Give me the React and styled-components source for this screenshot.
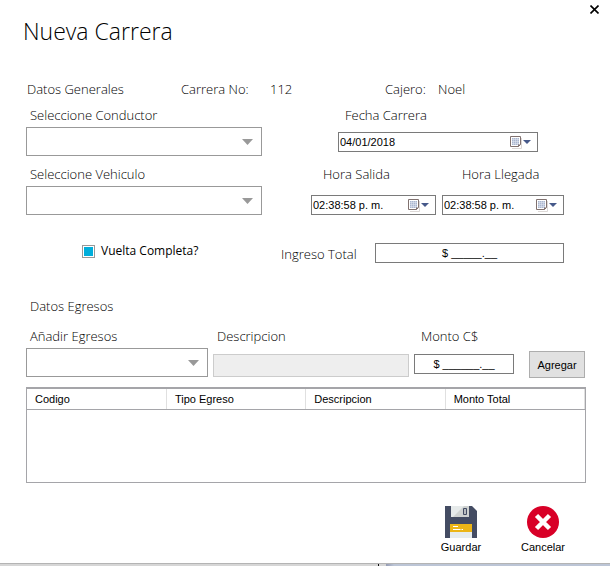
import React, { useState } from "react";
import styled, { createGlobalStyle } from "styled-components";

const GlobalStyle = createGlobalStyle`
  * { box-sizing: border-box; }
  body {
    margin: 0;
    background: #fff;
    color: #000;
    font-family: "Liberation Sans", Arial, sans-serif;
    font-size: 11px;
  }
  button, input, select { font: inherit; color: inherit; }
`;

const Dialog = styled.form`
  display: flex;
  flex-direction: column;
  background: #fff;
`;

const Header = styled.header`
  display: flex;
  justify-content: space-between;
  align-items: flex-start;
  height: 79px;
  padding: 2px 8px 0 23px;
`;

const Title = styled.h1`
  margin: 13px 0 0;
  font: 300 23px/32px "Open Sans", "Noto Sans", sans-serif;
`;

const CloseButton = styled.button`
  display: flex;
  padding: 3px;
  border: 0;
  background: none;
`;

const Content = styled.main`
  display: flex;
  flex-direction: column;
  padding: 0 24px 0 26px;
`;

const InfoRow = styled.div`
  display: grid;
  grid-template-columns: 154fr 89fr 115fr 53fr 148fr;
  padding-left: 1px;
  margin-bottom: 6px;
`;

const lightText = `
  font: 300 13px/20px "Open Sans", "Noto Sans", sans-serif;
  white-space: nowrap;
`;

const Caption = styled.label`
  ${lightText}
  padding-left: ${(p) => p.$indent || 0}px;
`;

const SectionTitle = styled.h2`
  ${lightText}
  margin: ${(p) => (p.$spaced ? "32px 0 10px 4px" : "0")};
`;

const Info = styled.span`
  ${lightText}
`;

const GeneralGrid = styled.div`
  display: grid;
  grid-template-columns: minmax(0, 236fr) minmax(0, 253fr);
  gap: 8px 49px;
  padding-right: 22px;
`;

const Field = styled.div`
  display: flex;
  flex-direction: column;
  min-width: 0;
  gap: ${(p) => p.$gap}px;
`;

const DateField = styled(Field)`
  padding: 0 26px 0 27px;
`;

const TimePair = styled.div`
  display: grid;
  grid-template-columns: 125fr 122fr;
  gap: 6px;
`;

const SelectFrame = styled.div`
  display: grid;
  align-items: center;

  > * { grid-area: 1 / 1; }
  > svg { justify-self: end; margin-right: 9px; pointer-events: none; }
`;

const SelectBox = styled.select`
  appearance: none;
  width: 100%;
  height: 29px;
  padding: 0 26px 0 6px;
  border: 1px solid #999;
  border-radius: 0;
  background: #fff;
`;

const PickerFrame = styled.div`
  display: flex;
  align-items: center;
  height: 20px;
  padding-right: 5px;
  border: 1px solid #7a7a7a;
`;

const PickerInput = styled.input`
  flex: 1;
  min-width: 0;
  padding: 0 0 0 1px;
  border: 0;
  background: none;
`;

const PickerButton = styled.button`
  display: flex;
  padding: 0;
  border: 0;
  background: none;
`;

const TotalsRow = styled.div`
  display: grid;
  grid-template-columns: 255fr 94fr 189fr;
  align-items: start;
  margin-top: 28px;
  padding-right: 22px;

  > ${Caption} { margin-top: 1px; }
`;

const CheckLabel = styled.label`
  display: flex;
  align-items: center;
  gap: 6px;
  padding-left: 56px;
  font: 400 12px/16px "Open Sans", "Noto Sans", sans-serif;
  white-space: nowrap;
`;

const CheckBox = styled.input`
  appearance: none;
  width: 13px;
  height: 13px;
  margin: 0;
  border: 1px solid #999;
  background: #fff;

  &:checked {
    background: #00aedb;
    box-shadow: inset 0 0 0 1px #fff;
  }
`;

const MaskedInput = styled.input`
  width: 100%;
  height: 20px;
  padding: 0 2px;
  border: 1px solid #7a7a7a;
  background: #fff;
  text-align: center;
`;

const DescriptionInput = styled.input`
  width: 100%;
  height: 23px;
  padding: 0 4px;
  border: 1px solid #ccc;
  background: #eee;
`;

const ExpenseRow = styled.div`
  display: grid;
  grid-template-columns: minmax(0, 182fr) minmax(0, 196fr) minmax(0, 100fr) auto;
  column-gap: 5px;
  align-items: start;
`;

const AddButton = styled.button`
  width: 56px;
  height: 27px;
  margin: 25px 1px 0 10px;
  padding: 0;
  border: 1px solid #adadad;
  background: #e1e1e1;
`;

const TableFrame = styled.div`
  min-height: 96px;
  margin-top: 9px;
  border: 1px solid #a5a5a9;
  border-top-width: 2px;
`;

const Table = styled.table`
  width: 100%;
  border-collapse: collapse;
  table-layout: fixed;
`;

const HeadCell = styled.th`
  height: 20px;
  padding: 0 8px;
  border-bottom: 1px solid #a5a5a9;
  border-right: 1px solid #e0e0e0;
  font-weight: 400;
  text-align: left;
`;

const Actions = styled.footer`
  display: flex;
  justify-content: flex-end;
  gap: 22px;
  margin-top: 23px;
  padding: 0 13px 8px 0;
`;

const ActionButton = styled.button`
  display: flex;
  flex-direction: column;
  align-items: center;
  gap: 1px;
  width: 60px;
  padding: 0;
  border: 0;
  background: none;
  line-height: 16px;
`;

const BottomEdge = styled.div`
  display: grid;
  grid-template-columns: 378fr 1px 7px 224fr;
  height: 3px;
  border-top: 1px solid #b4b4b4;
  background: #d6d6d6;
`;

const EdgeTick = styled.i`
  grid-column: 2;
  background: #111;
`;

const EdgePanel = styled.i`
  grid-column: 4;
  background: linear-gradient(90deg, #949bb3, #bcc5d6 8px);
`;

const ArrowIcon = () => (
  <svg width="11" height="6" viewBox="0 0 11 6" aria-hidden="true">
    <path d="M0 0h11L5.500 6z" fill="#999" />
  </svg>
);

const CalendarIcon = () => (
  <svg width="22" height="14" viewBox="0 0 22 14" aria-hidden="true">
    <path d="M2 13.500h9.500V3" fill="none" stroke="#ddd8d6" />
    <path d="M.5 1.500h10v8l-2 2h-8z" fill="#fff" stroke="#80716f" />
    <path d="M2 3h7v7H2z" fill="#aab6cf" />
    <path d="M3.500 3v7M5.500 3v7M7.500 3v7M2 4.500h7M2 6.500h7M2 8.500h7" stroke="#e6eaf3" strokeWidth=".5" />
    <path d="M8 12v-2.500h3z" fill="#80716f" />
    <path d="M13 5h8l-4 4z" fill="#46598a" />
  </svg>
);

const CloseIcon = () => (
  <svg width="9" height="9" viewBox="0 0 9 9" aria-hidden="true">
    <path d="M.5.5l8 8M8.500.5l-8 8" stroke="#000" strokeWidth="1.600" />
  </svg>
);

const SaveIcon = () => (
  <svg width="32" height="32" viewBox="0 0 32 32" aria-hidden="true">
    <path d="M0 0h27l5 5v27H0z" fill="#444c63" />
    <path d="M6 0h18v11H6z" fill="#cfd2d1" />
    <path d="M6 0h13L8 11H6z" fill="#e6eaea" />
    <path d="M18.500 2.500h3v6h-3z" fill="#b8bcc0" stroke="#444c63" />
    <path d="M5 18h22v14H5z" fill="#e6ecee" />
    <path d="M5 18h22v8H5z" fill="#ecb516" />
    <path d="M8 20.500h5M8 23.500h7.500M16.500 23.500h1.500" stroke="#fff" strokeWidth="1.200" />
  </svg>
);

const CancelIcon = () => (
  <svg width="32" height="32" viewBox="0 0 32 32" aria-hidden="true">
    <circle cx="16" cy="16" r="16" fill="#d80027" />
    <path d="M9.500 9.500l13 13M22.500 9.500l-13 13" stroke="#fff" strokeWidth="4.500" />
  </svg>
);

const Select = ({ id }) => (
  <SelectFrame>
    <SelectBox id={id} defaultValue="">
      <option value="" />
    </SelectBox>
    <ArrowIcon />
  </SelectFrame>
);

const Picker = ({ id, value }) => (
  <PickerFrame>
    <PickerInput id={id} type="text" defaultValue={value} />
    <PickerButton type="button" aria-label="Abrir selector">
      <CalendarIcon />
    </PickerButton>
  </PickerFrame>
);

const columns = ["Codigo", "Tipo Egreso", "Descripcion", "Monto Total"];

export default function App() {
  const [complete, setComplete] = useState(true);
  return (
    <>
      <GlobalStyle />
      <Dialog onSubmit={(e) => e.preventDefault()}>
        <Header>
          <Title>Nueva Carrera</Title>
          <CloseButton type="button" aria-label="Cerrar">
            <CloseIcon />
          </CloseButton>
        </Header>
        <Content>
          <InfoRow>
            <SectionTitle>Datos Generales</SectionTitle>
            <Info>Carrera No:</Info>
            <Info>112</Info>
            <Info>Cajero:</Info>
            <Info>Noel</Info>
          </InfoRow>
          <GeneralGrid>
            <Field $gap={2}>
              <Caption htmlFor="conductor" $indent={4}>Seleccione Conductor</Caption>
              <Select id="conductor" />
            </Field>
            <DateField $gap={7}>
              <Caption htmlFor="fecha" $indent={7}>Fecha Carrera</Caption>
              <Picker id="fecha" value="04/01/2018" />
            </DateField>
            <Field $gap={2}>
              <Caption htmlFor="vehiculo" $indent={4}>Seleccione Vehiculo</Caption>
              <Select id="vehiculo" />
            </Field>
            <TimePair>
              <Field $gap={11}>
                <Caption htmlFor="salida" $indent={12}>Hora Salida</Caption>
                <Picker id="salida" value="02:38:58 p. m." />
              </Field>
              <Field $gap={11}>
                <Caption htmlFor="llegada" $indent={20}>Hora Llegada</Caption>
                <Picker id="llegada" value="02:38:58 p. m." />
              </Field>
            </TimePair>
          </GeneralGrid>
          <TotalsRow>
            <CheckLabel>
              <CheckBox type="checkbox" checked={complete} onChange={(e) => setComplete(e.target.checked)} />
              Vuelta Completa?
            </CheckLabel>
            <Caption htmlFor="ingreso">Ingreso Total</Caption>
            <MaskedInput id="ingreso" type="text" defaultValue="$ _____.__" />
          </TotalsRow>
          <SectionTitle $spaced>Datos Egresos</SectionTitle>
          <ExpenseRow>
            <Field $gap={2}>
              <Caption htmlFor="egreso" $indent={4}>Añadir Egresos</Caption>
              <Select id="egreso" />
            </Field>
            <Field $gap={8}>
              <Caption htmlFor="descripcion" $indent={4}>Descripcion</Caption>
              <DescriptionInput id="descripcion" type="text" disabled />
            </Field>
            <Field $gap={8}>
              <Caption htmlFor="monto" $indent={7}>Monto C$</Caption>
              <MaskedInput id="monto" type="text" defaultValue="$ ______.__" />
            </Field>
            <AddButton type="button">Agregar</AddButton>
          </ExpenseRow>
          <TableFrame>
            <Table>
              <thead>
                <tr>
                  {columns.map((name) => (
                    <HeadCell key={name} scope="col">{name}</HeadCell>
                  ))}
                </tr>
              </thead>
              <tbody />
            </Table>
          </TableFrame>
          <Actions>
            <ActionButton type="submit">
              <SaveIcon />
              Guardar
            </ActionButton>
            <ActionButton type="button">
              <CancelIcon />
              Cancelar
            </ActionButton>
          </Actions>
        </Content>
        <BottomEdge>
          <EdgeTick />
          <EdgePanel />
        </BottomEdge>
      </Dialog>
    </>
  );
}
